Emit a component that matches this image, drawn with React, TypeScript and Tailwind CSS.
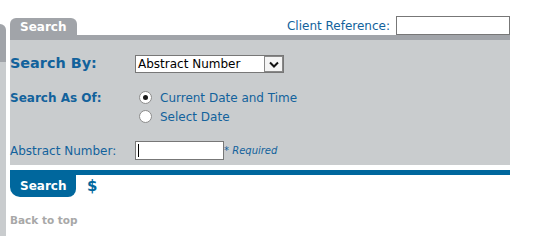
import React from "react";

const BLUE = "text-[#12629c]";

function Radio({ checked, label }: { checked?: boolean; label: string }) {
  return (
    <div className="flex items-center h-[19px] pl-[4px]">
      <span className="flex items-center justify-center w-[13px] h-[13px] rounded-full border border-[#8c8c8c] bg-white">
        {checked && <span className="w-[5px] h-[5px] rounded-full bg-[#1a1a1a]" />}
      </span>
      <span className={`ml-[8px] text-[12px] ${BLUE}`}>{label}</span>
    </div>
  );
}

export default function App() {
  return (
    <div
      className="flex w-[541px] h-[236px] bg-white overflow-hidden"
      style={{ fontFamily: '"DejaVu Sans", Verdana, sans-serif' }}
    >
      {/* Left edge of neighbouring panel */}
      <div className="flex flex-col w-[6px] mt-[24px] shrink-0">
        <div className="h-[38px] bg-[#a1a4a9] rounded-tr-[6px]" />
        <div className="flex-1 bg-[#c9ccce]" />
      </div>

      <div className="flex flex-col w-[500px] ml-[4px]">
        {/* Tab row */}
        <div className="flex items-end justify-between h-[35px]">
          <div className="flex items-center w-[67px] h-[17px] bg-[#a1a4a9] rounded-t-[6px] pl-[10px] text-[12px] font-bold text-white leading-none">
            Search
          </div>
          <div className="flex items-center">
            <span className={`text-[12px] ${BLUE} mr-[6px]`}>Client Reference:</span>
            <div className="w-[114px] h-[19px] border border-[#777] bg-white" />
          </div>
        </div>
        <div className="h-[5px] bg-[#a1a4a9]" />

        {/* Panel body */}
        <div className="flex flex-col h-[125px] bg-[#c9ccce] pt-[15px]">
          <div className="flex items-center h-[18px]">
            <div className={`w-[125px] text-[14.4px] font-bold ${BLUE}`}>Search By:</div>
            <div className="flex items-center w-[149px] h-[18px] border border-[#777] bg-white">
              <span className="flex-1 pl-[2px] text-[12px] text-black leading-none">Abstract Number</span>
              <span className="flex items-center justify-center w-[19px] h-[16px] border border-[#888] bg-[#f4f4f4]">
                <svg width="10" height="7" viewBox="0 0 10 7">
                  <polyline points="1,1.5 5,5.5 9,1.5" fill="none" stroke="#111" strokeWidth="2" />
                </svg>
              </span>
            </div>
          </div>

          <div className="flex mt-[15px]">
            <div className={`w-[125px] h-[19px] flex items-center text-[12px] font-bold ${BLUE}`}>Search As Of:</div>
            <div className="flex flex-col">
              <Radio checked label="Current Date and Time" />
              <Radio label="Select Date" />
            </div>
          </div>

          <div className="flex items-center mt-[15px] h-[19px]">
            <div className={`w-[125px] text-[12px] ${BLUE}`}>Abstract Number:</div>
            <div className="flex items-center w-[89px] h-[19px] border border-[#777] bg-white pl-[2px]">
              <span className="w-px h-[13px] bg-black" />
            </div>
            <span className={`text-[10px] italic ${BLUE}`}>* Required</span>
          </div>
        </div>

        <div className="h-[5px]" />
        <div className="h-[5px] bg-[#00679d]" />

        {/* Action row */}
        <div className="flex items-center">
          <button className="flex items-center w-[66px] h-[22px] bg-[#00679d] rounded-bl-[10px] rounded-br-[8px] pl-[10px] text-[12px] font-bold text-white leading-none">
            Search
          </button>
          <span className="ml-[11px] text-[15px] font-bold text-[#00679d]">$</span>
        </div>

        <div className="mt-[15px] text-[10.5px] font-bold text-[#a8a8a8]">Back to top</div>
      </div>
    </div>
  );
}
